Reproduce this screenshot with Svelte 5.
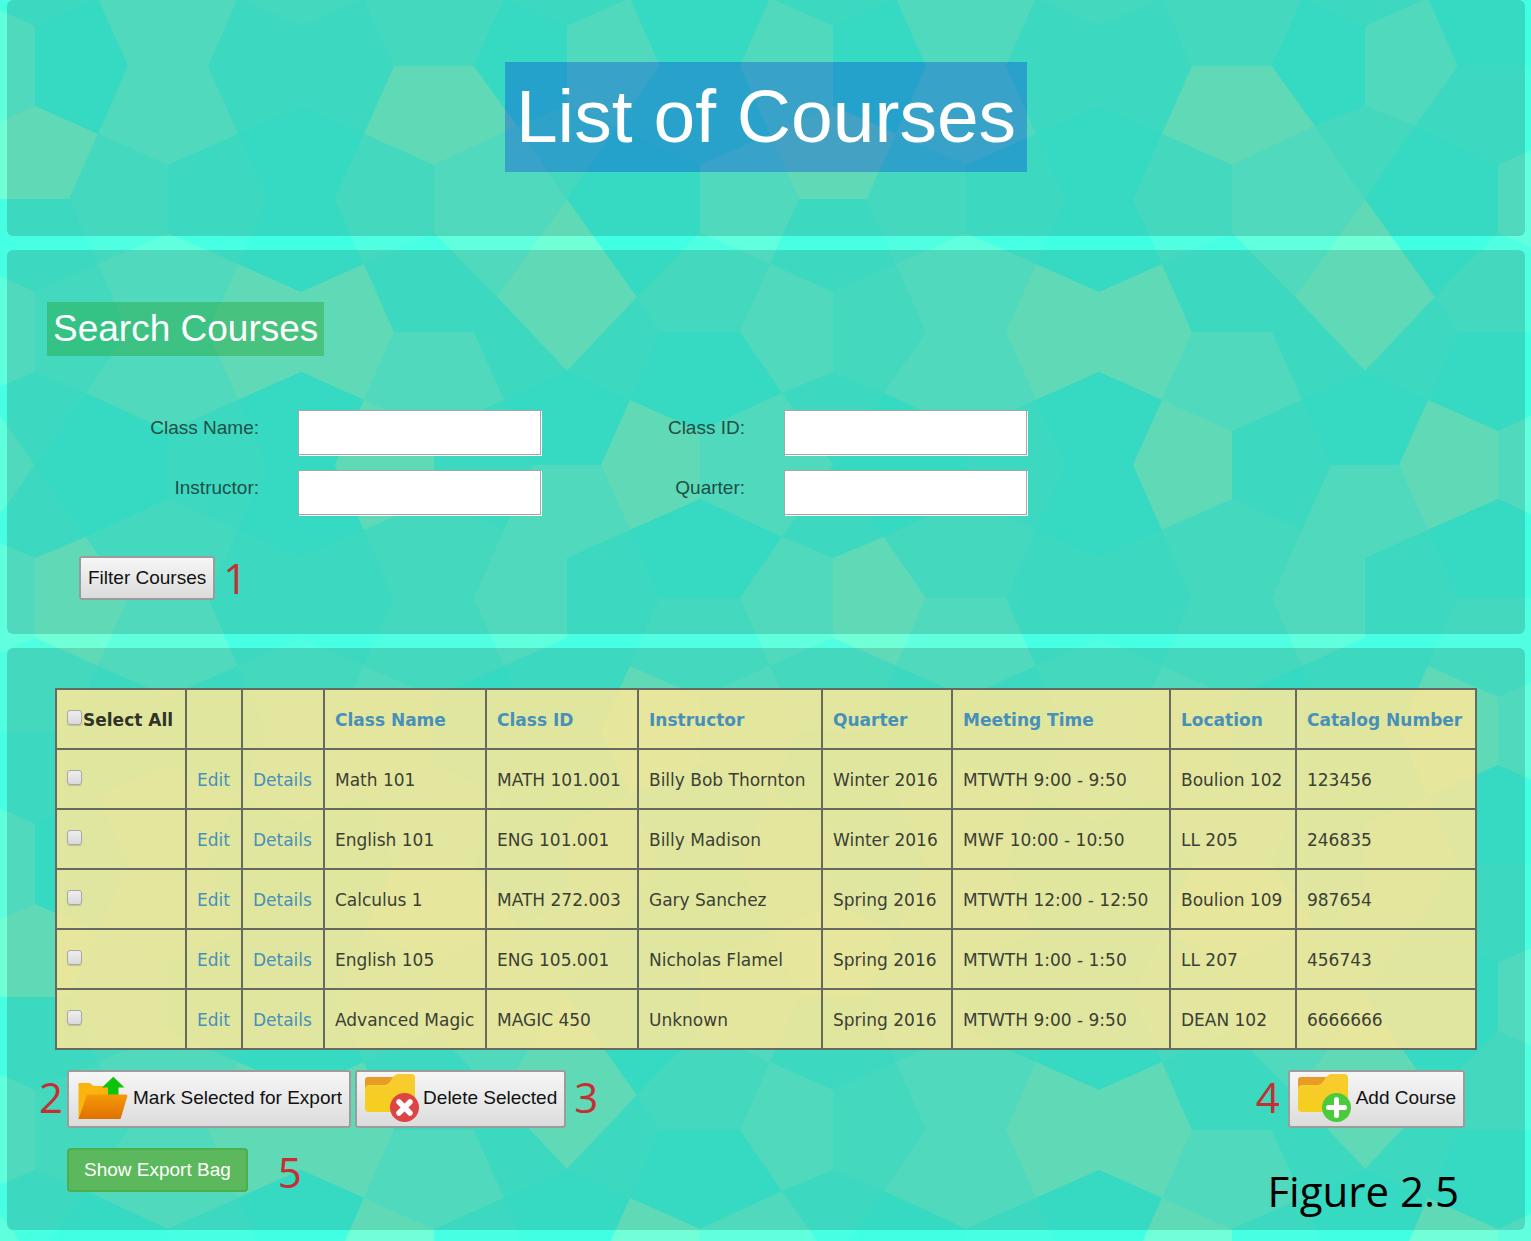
<script>
  // Background: a repeating pentagonal tiling. Nodes sit on a square lattice;
  // each carries a short segment shared by two pentagons.
  const TILE = 798;
  const STEP = 133;
  const shades = ['#40ffe3', '#47ffe2', '#50ffe1', '#60ffde', '#71ffd8'];

  // Two shade indices per node: west/east or north/south.
  const tones = [
    ['30', '33', '11', '24', '03', '01'],
    ['41', '21', '00', '23', '24', '03'],
    ['32', '33', '44', '13', '11', '20'],
    ['11', '01', '00', '41', '03', '43'],
    ['34', '23', '11', '22', '31', '02'],
    ['21', '11', '22', '30', '11', '43']
  ];

  const wrap = (n) => ((n % 6) + 6) % 6;
  const isVertical = (c, r) => wrap(c) % 2 === wrap(r) % 2;

  function end(c, r, side) {
    let half = wrap(r) % 2 === 0 ? 40 : 34;
    const x = 35 + STEP * c;
    const y = 66 + STEP * r;
    const cc = wrap(c);
    const rr = wrap(r);
    if (cc === 4 && rr === 2) return [x, y + 39];
    if ((cc === 4 && rr === 1) || (cc === 0 && rr === 3)) half = 0;
    return isVertical(c, r) ? [x, y + side * half] : [x + side * half, y];
  }

  // Four-way corner diagonal to node (c, r).
  function corner(c, r, sx, sy) {
    const ec = wrap(c) % 2 === 0 ? c : c + sx;
    const dx = wrap(c) % 2 === 0 ? sx : -sx;
    const or = wrap(r) % 2 === 1 ? r : r + sy;
    const dy = wrap(r) % 2 === 1 ? sy : -sy;
    let ox = 63;
    let oy = 65;
    if (wrap(ec) === 4 && wrap(or) === 1) {
      ox = dy < 0 ? 50 : 70;
      oy = dy < 0 ? 73 : 98;
    } else if (wrap(ec) === 0 && wrap(or) === 3) {
      ox = 51;
      oy = 72;
    }
    return [35 + STEP * ec + dx * ox, 66 + STEP * or + dy * oy];
  }

  function pentagon(c, r, s) {
    const v = isVertical(c, r);
    const pts = v
      ? [end(c, r, -1), end(c, r, 1), corner(c, r, s, 1), end(c + s, r, -s), corner(c, r, s, -1)]
      : [end(c, r, -1), end(c, r, 1), corner(c, r, 1, s), end(c, r + s, -s), corner(c, r, -1, s)];
    return pts.map((p) => p.join(',')).join(' ');
  }

  const shapes = [];
  for (let r = -1; r <= 6; r++) {
    for (let c = -1; c <= 6; c++) {
      const pair = tones[wrap(r)][wrap(c)];
      shapes.push({ points: pentagon(c, r, -1), fill: shades[pair[0]] });
      shapes.push({ points: pentagon(c, r, 1), fill: shades[pair[1]] });
    }
  }

  const widths = [130, 56, 82, 162, 152, 184, 130, 218, 126, 180];
  const total = widths.reduce((a, b) => a + b, 0);
  const headings = ['Class Name', 'Class ID', 'Instructor', 'Quarter', 'Meeting Time', 'Location', 'Catalog Number'];
  const courses = [
    ['Math 101', 'MATH 101.001', 'Billy Bob Thornton', 'Winter 2016', 'MTWTH 9:00 - 9:50', 'Boulion 102', '123456'],
    ['English 101', 'ENG 101.001', 'Billy Madison', 'Winter 2016', 'MWF 10:00 - 10:50', 'LL 205', '246835'],
    ['Calculus 1', 'MATH 272.003', 'Gary Sanchez', 'Spring 2016', 'MTWTH 12:00 - 12:50', 'Boulion 109', '987654'],
    ['English 105', 'ENG 105.001', 'Nicholas Flamel', 'Spring 2016', 'MTWTH 1:00 - 1:50', 'LL 207', '456743'],
    ['Advanced Magic', 'MAGIC 450', 'Unknown', 'Spring 2016', 'MTWTH 9:00 - 9:50', 'DEAN 102', '6666666']
  ];
  const fields = [
    { id: 'class-name', label: 'Class Name:' },
    { id: 'class-id', label: 'Class ID:' },
    { id: 'instructor', label: 'Instructor:' },
    { id: 'quarter', label: 'Quarter:' }
  ];

  let selected = $state(courses.map(() => false));
  const allSelected = $derived(selected.every(Boolean));
  function toggleAll(e) {
    const on = e.currentTarget.checked;
    selected = courses.map(() => on);
  }
</script>

{#snippet folder()}
  <path d="M0 16V6Q0 3 3 3H30V16Z" fill="url(#folder-back)" />
  <path d="M0 15Q0 11 4 11H19C27 11 26 0 34 0H46Q50 0 50 4V34Q50 38 46 38H4Q0 38 0 34Z" fill="url(#folder-front)" />
{/snippet}

<div class="page">
  <svg class="backdrop" aria-hidden="true">
    <defs>
      <pattern id="tiling" width={TILE} height={TILE} patternUnits="userSpaceOnUse">
        <rect width={TILE} height={TILE} fill={shades[1]} />
        {#each shapes as s}
          <polygon points={s.points} fill={s.fill} />
        {/each}
      </pattern>
      <linearGradient id="folder-back" x1="0" y1="0" x2="0" y2="1">
        <stop offset="0" stop-color="#ea9a22" /><stop offset="1" stop-color="#e3a02f" />
      </linearGradient>
      <linearGradient id="folder-front" x1="0" y1="0" x2="0" y2="1">
        <stop offset="0" stop-color="#f8cb31" /><stop offset="1" stop-color="#f5cf1d" />
      </linearGradient>
      <linearGradient id="open-front" x1="0" y1="0" x2="0" y2="1">
        <stop offset="0" stop-color="#f59a08" /><stop offset="1" stop-color="#df7000" />
      </linearGradient>
    </defs>
    <rect width="100%" height="100%" fill="url(#tiling)" />
  </svg>

  <header class="panel banner">
    <h1>List of Courses</h1>
  </header>

  <section class="panel search">
    <h2>Search Courses</h2>
    <form onsubmit={(e) => e.preventDefault()}>
      <div class="fields">
        {#each fields as f}
          <label for={f.id}>{f.label}</label>
          <input id={f.id} type="text" />
        {/each}
      </div>
      <div class="submit">
        <button type="submit" class="btn">Filter Courses</button>
        <span class="mark">1</span>
      </div>
    </form>
  </section>

  <main class="panel list">
    <div class="table-area">
      <table>
        <colgroup>
          {#each widths as w}<col style="width: {(w / total) * 100}%" />{/each}
        </colgroup>
        <thead>
          <tr>
            <th><label><input type="checkbox" checked={allSelected} onchange={toggleAll} />Select All</label></th>
            <th></th>
            <th></th>
            {#each headings as h}<th><a href="#sort">{h}</a></th>{/each}
          </tr>
        </thead>
        <tbody>
          {#each courses as course, i}
            <tr>
              <td><input type="checkbox" aria-label="Select {course[0]}" bind:checked={selected[i]} /></td>
              <td><a href="#edit">Edit</a></td>
              <td><a href="#details">Details</a></td>
              {#each course as value}<td>{value}</td>{/each}
            </tr>
          {/each}
        </tbody>
      </table>
    </div>

    <div class="actions">
      <div class="group">
        <span class="mark">2</span>
        <button type="button" class="btn tall">
          <svg width="52" height="48" viewBox="0 0 52 48" aria-hidden="true">
            <path d="M1.5 9H13L16.5 12H32V26L1.5 45Z" fill="#fbb40d" />
            <path d="M36.3 2.7L47.5 13.5H41.5V22H31V13.5H25Z" fill="#0cc40c" />
            <path d="M11.5 20.5H49Q51 20.5 50.3 22.5L43.5 45H1.5L9.5 22Q10 20.5 11.5 20.5Z" fill="url(#open-front)" />
          </svg>
          Mark Selected for Export
        </button>
        <button type="button" class="btn tall">
          <svg width="54" height="48" viewBox="0 0 54 48" aria-hidden="true">
            {@render folder()}
            <circle cx="39.5" cy="33.5" r="14.5" fill="#df4444" />
            <path d="M34 28L45 39M45 28L34 39" stroke="#fff" stroke-width="5.5" stroke-linecap="round" />
          </svg>
          Delete Selected
        </button>
        <span class="mark after">3</span>
      </div>
      <div class="group">
        <span class="mark before">4</span>
        <button type="button" class="btn tall">
          <svg width="54" height="48" viewBox="0 0 54 48" aria-hidden="true">
            {@render folder()}
            <circle cx="38.5" cy="33.5" r="14.5" fill="#49cb3c" />
            <path d="M38.5 25.5V41.5M30.5 33.5H46.5" stroke="#fff" stroke-width="5" stroke-linecap="round" />
          </svg>
          Add Course
        </button>
      </div>
    </div>

    <div class="bag">
      <button type="button" class="btn success">Show Export Bag</button>
      <span class="mark">5</span>
      <p class="caption">Figure 2.5</p>
    </div>
  </main>
</div>

<style>
  :global(body) {
    margin: 0;
    background: #47ffe2;
  }

  .page {
    position: relative;
    isolation: isolate;
    box-sizing: border-box;
    min-height: 100vh;
    padding: 0 6px 11px 7px;
    display: flex;
    flex-direction: column;
    gap: 14px;
    font-family: "Liberation Sans", Arial, sans-serif;
    font-size: 19px;
    color: #333;
  }

  .backdrop {
    position: absolute;
    inset: 0;
    width: 100%;
    height: 100%;
    z-index: -1;
  }

  .panel {
    background: rgba(0, 0, 0, 0.15);
    border-radius: 6px;
  }

  .banner {
    display: flex;
    justify-content: center;
    padding: 62px 0 64px;
  }

  h1,
  h2 {
    margin: 0;
    font-weight: 400;
    color: #fff;
  }

  h1 {
    padding: 0 11px 2px;
    font-size: 75px;
    line-height: 108px;
    background: rgba(0, 36, 230, 0.3);
  }

  .search {
    padding: 52px 32px 34px 28px;
  }

  h2 {
    display: inline-block;
    margin-left: 12px;
    padding: 0 6px;
    font-size: 37px;
    line-height: 54px;
    background: rgba(16, 143, 0, 0.3);
  }

  .fields {
    display: grid;
    grid-template-columns: repeat(6, 1fr);
    row-gap: 15px;
    margin-top: 54px;
  }

  .fields label {
    padding-right: 19px;
    line-height: 35px;
    text-align: right;
    color: #1f4f47;
  }

  .fields label:nth-of-type(odd) {
    grid-column: 1;
  }

  .fields label:nth-of-type(even) {
    grid-column: 3;
  }

  .fields input {
    box-sizing: border-box;
    width: 100%;
    height: 45px;
    margin: 0 0 0 20px;
    padding: 0 8px;
    border: 1px solid #a0a8a8;
    background: #fff;
    box-shadow: 1px 1px 0 #fff;
    font: inherit;
  }

  .submit {
    display: flex;
    align-items: center;
    gap: 8px;
    height: 44px;
    margin: 41px 0 0 44px;
  }

  .btn {
    box-sizing: border-box;
    display: flex;
    align-items: center;
    gap: 4px;
    height: 44px;
    padding: 0 7px;
    border: 2px solid #9c9c9c;
    border-radius: 3px;
    background: linear-gradient(#f6f6f6, #dcdcdc);
    font: inherit;
    color: #111;
    white-space: nowrap;
  }

  .tall {
    height: 58px;
    padding: 0 7px 2px 8px;
  }

  .success {
    padding: 0 15px;
    border-color: #4cae4c;
    border-radius: 4px;
    background: #5cb85c;
    color: #fff;
  }

  .mark,
  .caption {
    font-family: "Open Sans", "Noto Sans", sans-serif;
    font-size: 42px;
    line-height: 48px;
  }

  .mark {
    color: #c62f32;
  }

  .group .mark {
    padding-bottom: 4px;
  }

  .list {
    padding: 40px 0 15px;
  }

  .table-area {
    padding: 0 48px;
  }

  table {
    width: 100%;
    table-layout: fixed;
    border-collapse: collapse;
    background: rgba(254, 231, 153, 0.85);
    font-family: Verdana, "DejaVu Sans", sans-serif;
    font-size: 17px;
    color: #3b4035;
  }

  th,
  td {
    box-sizing: border-box;
    height: 60px;
    padding: 2px 10px 0;
    border: 2px solid #666a60;
    text-align: left;
    white-space: nowrap;
  }

  th {
    color: #2f3328;
  }

  a {
    color: #4790b9;
    text-decoration: none;
  }

  table input {
    appearance: none;
    box-sizing: border-box;
    width: 15px;
    height: 15px;
    margin: 0 1px 0 0;
    border: 1px solid #a8a8a8;
    border-radius: 3px;
    background: linear-gradient(#eee, #dadada);
    box-shadow: 0 1px 1px rgba(0, 0, 0, 0.15);
    vertical-align: 1px;
  }

  table input:checked {
    background: #428bca;
  }

  .actions,
  .group {
    display: flex;
    align-items: center;
    gap: 4px;
  }

  .actions {
    justify-content: space-between;
    margin-top: 20px;
    padding: 0 60px 0 32px;
  }

  .after {
    margin-left: 4px;
  }

  .before {
    margin-right: 4px;
  }

  .bag {
    display: flex;
    align-items: flex-start;
    gap: 30px;
    margin-top: 20px;
    padding: 0 66px 0 60px;
  }

  .caption {
    margin: 19px 0 0 auto;
    color: #000;
  }
</style>
